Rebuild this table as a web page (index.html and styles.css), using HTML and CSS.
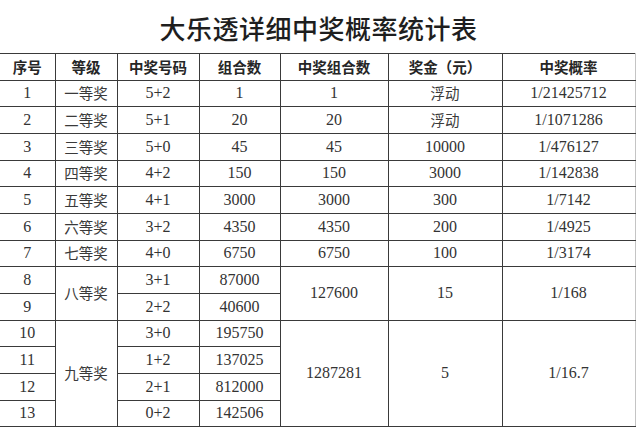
FILE: index.html
```html
<!DOCTYPE html>
<html lang="zh-CN">
<head>
<meta charset="utf-8">
<title>大乐透详细中奖概率统计表</title>
<link rel="stylesheet" href="styles.css">
</head>
<body>
<div class="page">
  <h1 class="title">大乐透详细中奖概率统计表</h1>
  <table class="prize">
    <colgroup>
      <col class="c1"><col class="c2"><col class="c3"><col class="c4"><col class="c5"><col class="c6"><col class="c7">
    </colgroup>
    <thead>
      <tr><th>序号</th><th>等级</th><th>中奖号码</th><th>组合数</th><th>中奖组合数</th><th>奖金（元）</th><th>中奖概率</th></tr>
    </thead>
    <tbody>
      <tr><td>1</td><td class="cn">一等奖</td><td>5+2</td><td>1</td><td>1</td><td class="cn">浮动</td><td>1/21425712</td></tr>
      <tr><td>2</td><td class="cn">二等奖</td><td>5+1</td><td>20</td><td>20</td><td class="cn">浮动</td><td>1/1071286</td></tr>
      <tr><td>3</td><td class="cn">三等奖</td><td>5+0</td><td>45</td><td>45</td><td>10000</td><td>1/476127</td></tr>
      <tr><td>4</td><td class="cn">四等奖</td><td>4+2</td><td>150</td><td>150</td><td>3000</td><td>1/142838</td></tr>
      <tr><td>5</td><td class="cn">五等奖</td><td>4+1</td><td>3000</td><td>3000</td><td>300</td><td>1/7142</td></tr>
      <tr><td>6</td><td class="cn">六等奖</td><td>3+2</td><td>4350</td><td>4350</td><td>200</td><td>1/4925</td></tr>
      <tr><td>7</td><td class="cn">七等奖</td><td>4+0</td><td>6750</td><td>6750</td><td>100</td><td>1/3174</td></tr>
      <tr><td>8</td><td class="cn" rowspan="2">八等奖</td><td>3+1</td><td>87000</td><td rowspan="2">127600</td><td rowspan="2">15</td><td rowspan="2">1/168</td></tr>
      <tr><td>9</td><td>2+2</td><td>40600</td></tr>
      <tr><td>10</td><td class="cn" rowspan="4">九等奖</td><td>3+0</td><td>195750</td><td rowspan="4">1287281</td><td rowspan="4">5</td><td rowspan="4">1/16.7</td></tr>
      <tr><td>11</td><td>1+2</td><td>137025</td></tr>
      <tr><td>12</td><td>2+1</td><td>812000</td></tr>
      <tr><td>13</td><td>0+2</td><td>142506</td></tr>
    </tbody>
  </table>
</div>
</body>
</html>
```

FILE: styles.css
```css
html, body {
  margin: 0;
  padding: 0;
  background: #ffffff;
}

.page {
  width: 637px;
  height: 428px;
  overflow: hidden;
}

.title {
  margin: 0;
  height: 53px;
  line-height: 56px;
  text-align: center;
  font-family: "Noto Sans CJK SC", sans-serif;
  font-size: 26px;
  font-weight: 500;
  letter-spacing: 0.5px;
  color: #1e1e1e;
}

.prize {
  border-collapse: collapse;
  table-layout: fixed;
  width: 635px;
  font-family: "Liberation Serif", "Noto Sans CJK SC", serif;
  font-size: 16px;
  color: #333333;
}

.c1 { width: 55px; }
.c2 { width: 62px; }
.c3 { width: 82px; }
.c4 { width: 81px; }
.c5 { width: 108px; }
.c6 { width: 114px; }
.c7 { width: 133px; }

.prize th,
.prize td {
  border: 1px solid #3a3a3a;
  padding: 0;
  height: 25.67px;
  text-align: center;
  vertical-align: middle;
  line-height: 18px;
}

.prize tr > :first-child {
  border-left: none;
}

.prize tr > :last-child {
  border-right-color: #c4c4c4;
}

.prize td.cn {
  font-family: "Noto Sans CJK SC", sans-serif;
  font-size: 14.5px;
  color: #3a3a3a;
}

.prize th {
  font-family: "Noto Sans CJK SC", sans-serif;
  font-weight: 700;
  font-size: 14.5px;
  color: #262626;
}
```
